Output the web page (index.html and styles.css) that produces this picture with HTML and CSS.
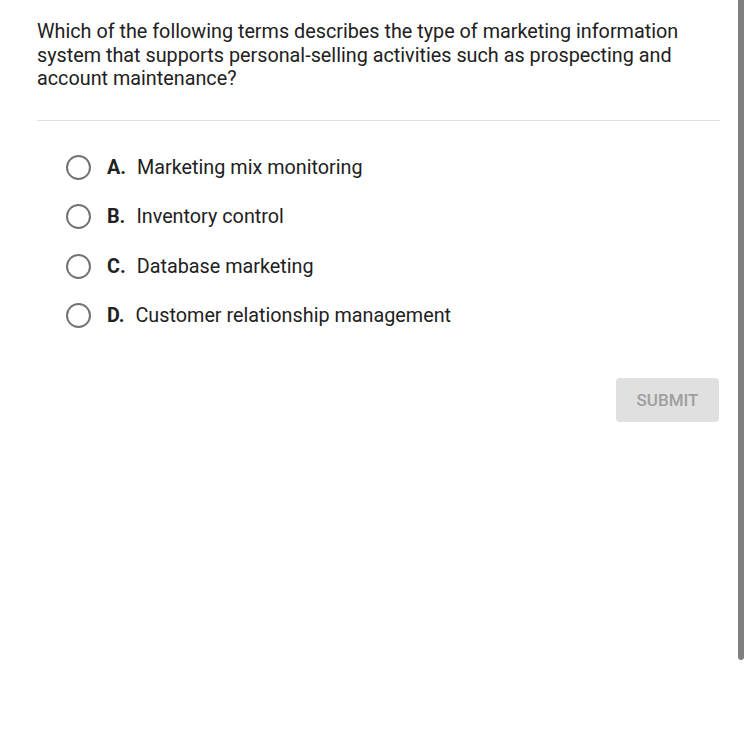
FILE: index.html
```html
<!DOCTYPE html>
<html lang="en">
<head>
  <meta charset="UTF-8" />
  <title>Question</title>
  <link rel="stylesheet" href="styles.css">
</head>
<body>
  <div class="page">
    <p class="question">Which of the following terms describes the type of marketing information system that supports personal-selling activities such as prospecting and account maintenance?</p>

    <hr class="divider">

    <!-- 選択肢 -->
    <div class="choices">
      <label class="choice">
        <span class="radio"></span>
        <span class="letter">A.</span>
        <span class="text">Marketing mix monitoring</span>
      </label>
      <label class="choice">
        <span class="radio"></span>
        <span class="letter">B.</span>
        <span class="text">Inventory control</span>
      </label>
      <label class="choice">
        <span class="radio"></span>
        <span class="letter">C.</span>
        <span class="text">Database marketing</span>
      </label>
      <label class="choice">
        <span class="radio"></span>
        <span class="letter">D.</span>
        <span class="text">Customer relationship management</span>
      </label>
    </div>

    <div class="actions">
      <button class="submit" disabled>SUBMIT</button>
    </div>
  </div>

  <div class="scrollbar"></div>
</body>
</html>
```

FILE: styles.css
```css
body {
  margin: 0;
  background: #fff;
  font-family: Roboto, "Liberation Sans", sans-serif;
  color: #212121;
}
.page {
  width: 683px;
  padding: 20px 0 0 37px;
}
.question {
  margin: 0;
  font-size: 19.8px;
  line-height: 23.5px;
}
.divider {
  border: none;
  border-top: 1px solid #e0e0e0;
  margin: 29px 0 0;
}

/* 選択肢 */
.choices {
  padding: 34px 0 0 29px;
  display: flex;
  flex-direction: column;
  gap: 24.5px;
}
.choice {
  display: flex;
  align-items: center;
  height: 25px;
  font-size: 19.8px;
  cursor: pointer;
}
.radio {
  width: 21px;
  height: 21px;
  border: 2px solid #737373;
  border-radius: 50%;
  margin-right: 16px;
  flex-shrink: 0;
}
.letter {
  font-weight: bold;
  margin-right: 11px;
}

/* 送信 */
.actions {
  display: flex;
  justify-content: flex-end;
  margin-top: 50px;
}
.submit {
  width: 103px;
  height: 44px;
  border: none;
  border-radius: 4px;
  background: #e0e0e0;
  color: #9e9e9e;
  font-family: Roboto, "Liberation Sans", sans-serif;
  font-size: 17px;
  font-weight: 500;
  margin-right: 1px;
}

.scrollbar {
  position: absolute;
  top: 0;
  left: 738px;
  width: 6px;
  height: 660px;
  background: #808080;
  border-radius: 0 0 3px 3px;
}
```
